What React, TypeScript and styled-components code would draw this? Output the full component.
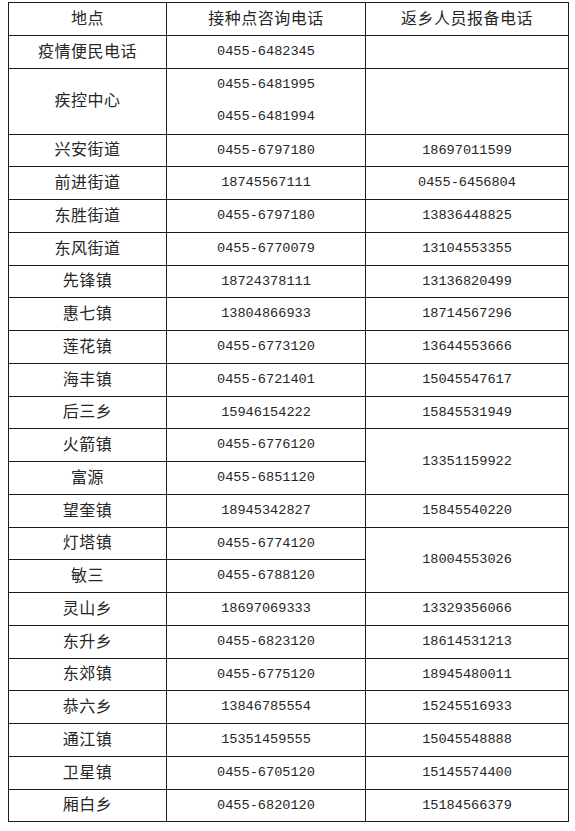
import styled, { createGlobalStyle } from "styled-components";

const GlobalStyle = createGlobalStyle`
  html, body {
    margin: 0;
    padding: 0;
    background: #ffffff;
  }
`;

const Page = styled.div`
  padding: 2px 0 0 8px;
`;

const Table = styled.table`
  width: 560px;
  border-collapse: collapse;
  table-layout: fixed;
  color: #262626;
`;

const Row = styled.tr`
  height: 32.75px;
`;

const Cell = styled.td<{ $num?: boolean }>`
  border: 1px solid #1c1c1c;
  padding: ${(p) => (p.$num ? "0" : "0 0 4px")};
  text-align: center;
  vertical-align: middle;
  font-family: ${(p) =>
    p.$num ? '"Liberation Mono", monospace' : '"Noto Sans CJK SC", sans-serif'};
  font-size: ${(p) => (p.$num ? "13.6px" : "16px")};
  letter-spacing: ${(p) => (p.$num ? "0" : "0.5px")};
  line-height: 1;
`;

const Stack = styled.div`
  display: grid;
  grid-auto-rows: 32.5px;
  align-items: center;
`;

type Item = {
  place: string;
  phone: string;
  back?: string;
  backSpan?: number;
  skipBack?: boolean;
};

const rows: Item[] = [
  { place: "兴安街道", phone: "0455-6797180", back: "18697011599" },
  { place: "前进街道", phone: "18745567111", back: "0455-6456804" },
  { place: "东胜街道", phone: "0455-6797180", back: "13836448825" },
  { place: "东风街道", phone: "0455-6770079", back: "13104553355" },
  { place: "先锋镇", phone: "18724378111", back: "13136820499" },
  { place: "惠七镇", phone: "13804866933", back: "18714567296" },
  { place: "莲花镇", phone: "0455-6773120", back: "13644553666" },
  { place: "海丰镇", phone: "0455-6721401", back: "15045547617" },
  { place: "后三乡", phone: "15946154222", back: "15845531949" },
  { place: "火箭镇", phone: "0455-6776120", back: "13351159922", backSpan: 2 },
  { place: "富源", phone: "0455-6851120", skipBack: true },
  { place: "望奎镇", phone: "18945342827", back: "15845540220" },
  { place: "灯塔镇", phone: "0455-6774120", back: "18004553026", backSpan: 2 },
  { place: "敏三", phone: "0455-6788120", skipBack: true },
  { place: "灵山乡", phone: "18697069333", back: "13329356066" },
  { place: "东升乡", phone: "0455-6823120", back: "18614531213" },
  { place: "东郊镇", phone: "0455-6775120", back: "18945480011" },
  { place: "恭六乡", phone: "13846785554", back: "15245516933" },
  { place: "通江镇", phone: "15351459555", back: "15045548888" },
  { place: "卫星镇", phone: "0455-6705120", back: "15145574400" },
  { place: "厢白乡", phone: "0455-6820120", back: "15184566379" },
];

export default function App() {
  return (
    <>
      <GlobalStyle />
      <Page>
        <Table>
          <colgroup>
            <col style={{ width: 158 }} />
            <col style={{ width: 199 }} />
            <col style={{ width: 203 }} />
          </colgroup>
          <tbody>
            <Row>
              <Cell>地点</Cell>
              <Cell>接种点咨询电话</Cell>
              <Cell>返乡人员报备电话</Cell>
            </Row>
            <Row>
              <Cell>疫情便民电话</Cell>
              <Cell $num>0455-6482345</Cell>
              <Cell $num />
            </Row>
            <Row style={{ height: 65.5 }}>
              <Cell>疾控中心</Cell>
              <Cell $num>
                <Stack>
                  <span>0455-6481995</span>
                  <span>0455-6481994</span>
                </Stack>
              </Cell>
              <Cell $num />
            </Row>
            {rows.map((r) => (
              <Row key={r.place}>
                <Cell>{r.place}</Cell>
                <Cell $num>{r.phone}</Cell>
                {!r.skipBack && (
                  <Cell $num rowSpan={r.backSpan ?? 1}>
                    {r.back}
                  </Cell>
                )}
              </Row>
            ))}
          </tbody>
        </Table>
      </Page>
    </>
  );
}
